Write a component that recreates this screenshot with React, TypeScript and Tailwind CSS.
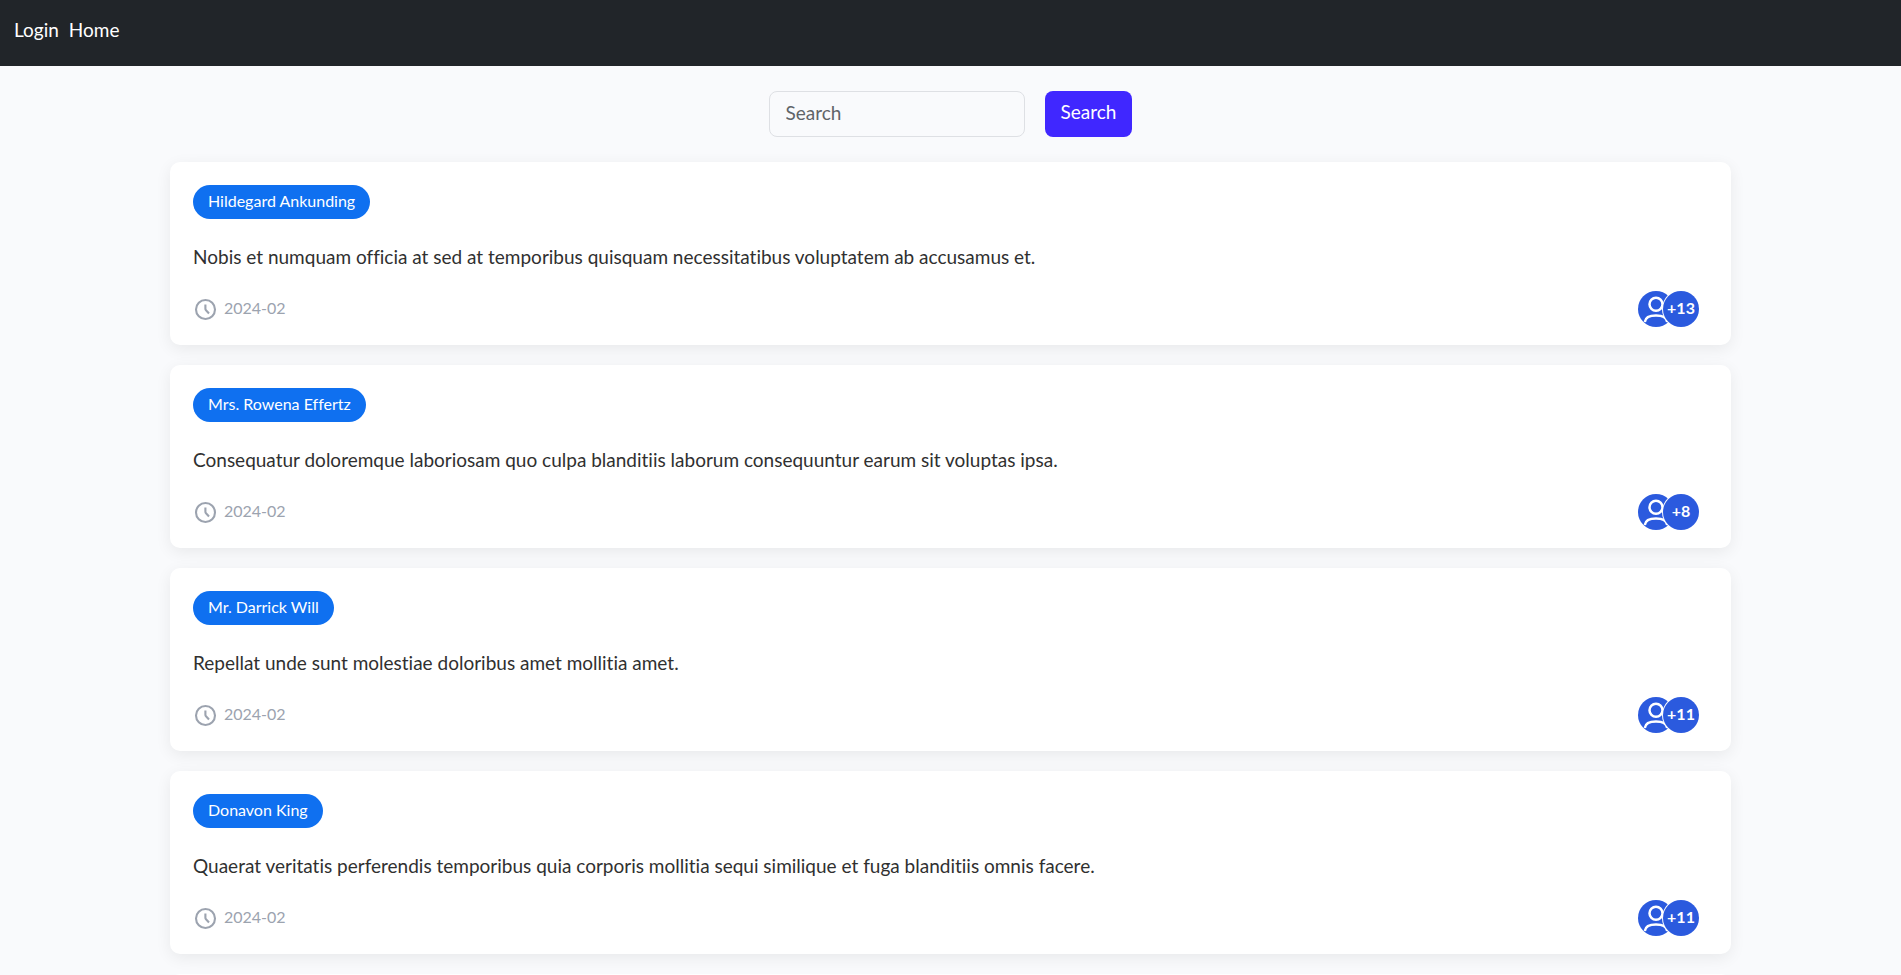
import { FormEvent, useState } from 'react';

interface Post {
  id: number;
  author: string;
  title: string;
  date: string;
  others: number;
}

const posts: Post[] = [
  {
    id: 1,
    author: 'Hildegard Ankunding',
    title: 'Nobis et numquam officia at sed at temporibus quisquam necessitatibus voluptatem ab accusamus et.',
    date: '2024-02',
    others: 13,
  },
  {
    id: 2,
    author: 'Mrs. Rowena Effertz',
    title: 'Consequatur doloremque laboriosam quo culpa blanditiis laborum consequuntur earum sit voluptas ipsa.',
    date: '2024-02',
    others: 8,
  },
  {
    id: 3,
    author: 'Mr. Darrick Will',
    title: 'Repellat unde sunt molestiae doloribus amet mollitia amet.',
    date: '2024-02',
    others: 11,
  },
  {
    id: 4,
    author: 'Donavon King',
    title: 'Quaerat veritatis perferendis temporibus quia corporis mollitia sequi similique et fuga blanditiis omnis facere.',
    date: '2024-02',
    others: 11,
  },
];

function ClockIcon() {
  return (
    <svg viewBox="0 0 24 24" className="size-6 shrink-0" fill="none" stroke="currentColor" aria-hidden="true">
      <circle cx="12.5" cy="12.5" r="9.5" strokeWidth="2.1" />
      <path d="M12.4 7.4v4.4c0 .6.2 1.1.6 1.5l3 3.2" strokeWidth="2.1" />
    </svg>
  );
}

function UserIcon() {
  return (
    <svg viewBox="0 0 36 36" className="size-9" fill="none" stroke="currentColor" strokeWidth="2.5" aria-hidden="true">
      <circle cx="18" cy="13.2" r="6.5" />
      <path d="M6.8 31C7.4 26.6 10.8 24.6 18 24.6S28.6 26.6 29.2 31" />
    </svg>
  );
}

function PostCard({ post }: { post: Post }) {
  return (
    <article className="rounded-[10px] bg-white px-[23px] pt-[23px] pb-[18px] shadow-[0_4px_16px_rgba(0,0,0,0.07)]">
      <a
        href="#"
        className="inline-block rounded-full bg-[#0f70f0] px-[15px] pb-0.5 align-top text-base leading-8 text-white"
      >
        {post.author}
      </a>
      <p className="mt-6 mb-5 text-[19px] leading-7 text-[#303030]">{post.title}</p>
      <div className="flex items-center justify-between">
        <div className="flex items-center gap-[7px] text-[#9ca3af]">
          <ClockIcon />
          <time className="pb-0.5 text-base leading-6">{post.date}</time>
        </div>
        <div className="mr-[9px] flex items-center text-white">
          <span className="size-9 overflow-hidden rounded-full bg-[#2b5ade]">
            <UserIcon />
          </span>
          <span className="z-10 -ml-[11px] flex size-9 items-center justify-center rounded-full bg-[#2b5ade] pb-0.5 text-base font-bold ring-1 ring-white">
            +{post.others}
          </span>
        </div>
      </div>
    </article>
  );
}

export default function App() {
  const [query, setQuery] = useState('');
  const [filter, setFilter] = useState('');

  const handleSubmit = (e: FormEvent) => {
    e.preventDefault();
    setFilter(query.trim().toLowerCase());
  };

  const visible = posts.filter(p => p.title.toLowerCase().includes(filter));

  return (
    <div className="min-h-screen bg-[#f9fafc] font-['Lato',sans-serif] [font-variant-ligatures:none]">
      <nav className="flex h-[66px] gap-[10px] bg-[#212529] px-[14px] pt-4 text-[19px] leading-7 text-white">
        <a href="#">Login</a>
        <a href="#">Home</a>
      </nav>

      <main className="mx-auto max-w-[1561px] pt-[25px]">
        <form onSubmit={handleSubmit} className="mb-[25px] flex justify-center gap-5 text-[19px] leading-7">
          <input
            type="text"
            aria-label="Search"
            placeholder="Search"
            value={query}
            onChange={e => setQuery(e.target.value)}
            className="h-[46px] w-64 rounded-lg border border-[#dee0e4] px-4 pb-1 text-[#303030] placeholder:text-[#606468]"
          />
          <button type="submit" className="h-[46px] rounded-lg bg-[#4027ff] px-4 pb-1 text-white">
            Search
          </button>
        </form>

        <section className="flex flex-col gap-5">
          {visible.map(post => (
            <PostCard key={post.id} post={post} />
          ))}
          <div className="h-10 rounded-[10px] bg-white" />
        </section>
      </main>
    </div>
  );
}
